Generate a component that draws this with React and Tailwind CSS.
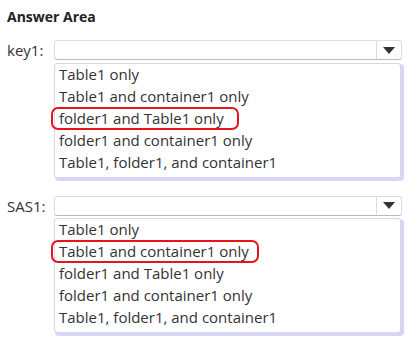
export default function App() {
  const opts = [
    "Table1 only",
    "Table1 and container1 only",
    "folder1 and Table1 only",
    "folder1 and container1 only",
    "Table1, folder1, and container1",
  ];
  const Block = ({ label, mark, markW, top }) => (
    <div className={top}>
      <div className="flex items-center">
        <div className="w-[54px] pl-[7px] text-[15px] text-[#333]">{label}</div>
        <div className="flex h-[20px] w-[348px] rounded-[3px] border border-[#dcdcf0] border-b-[#b8b8c8] bg-white">
          <div className="flex-1" />
          <div className="flex w-[25px] items-center justify-center border-l border-[#dcdcdc]">
            <svg width="12" height="7" viewBox="0 0 12 7"><path d="M0 0h12L6 7z" fill="#333" /></svg>
          </div>
        </div>
      </div>
      <div className="ml-[54px] mt-[1px] w-[347px] rounded-[3px] border border-[#d8d8e4] bg-white pb-[3px] shadow-[2px_2px_0_1px_#d6d6fb]">
        {opts.map((o, i) => (
          <div key={i} className="relative h-[22px] pl-[4px] text-[15px] leading-[21px] text-[#333]">
            {o}
            {i === mark && (
              <div className={`absolute left-[-4px] top-[-1px] h-[23px] rounded-[7px] border-2 border-[#e8141c] ${markW}`} />
            )}
          </div>
        ))}
      </div>
    </div>
  );
  return (
    <div className="h-[349px] w-[419px] bg-white" style={{ fontFamily: '"Open Sans", "Noto Sans", sans-serif' }}>
      <div className="pl-[7px] pt-[6px] text-[14px] font-bold text-[#222]">Answer Area</div>
      <div className="mt-[12px]">
        <Block label="key1:" mark={2} markW="w-[188px]" top="" />
      </div>
      <Block label="SAS1:" mark={1} markW="w-[208px]" top="mt-[17px]" />
    </div>
  );
}
